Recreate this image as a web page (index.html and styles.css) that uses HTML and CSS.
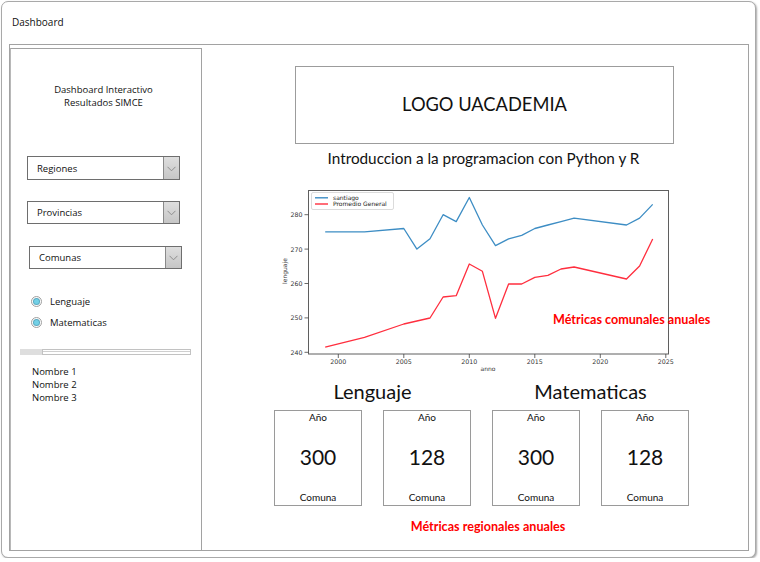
FILE: index.html
```html
<!DOCTYPE html>
<html lang="es">
<head>
<meta charset="utf-8">
<title>Dashboard</title>
<link rel="stylesheet" href="styles.css">
</head>
<body>
<div class="window">
  <div class="titlebar">Dashboard</div>
  <div class="frame">
    <aside class="sidebar">
      <div class="side-title">Dashboard Interactivo<br>Resultados SIMCE</div>

      <div class="select sel-regiones">
        <span class="sel-label">Regiones</span>
        <span class="sel-btn"><svg width="9" height="6" viewBox="0 0 9 6"><polyline points="0.5,0.8 4.5,4.8 8.5,0.8" fill="none" stroke="#8e8e8e" stroke-width="1"/></svg></span>
      </div>
      <div class="select sel-provincias">
        <span class="sel-label">Provincias</span>
        <span class="sel-btn"><svg width="9" height="6" viewBox="0 0 9 6"><polyline points="0.5,0.8 4.5,4.8 8.5,0.8" fill="none" stroke="#8e8e8e" stroke-width="1"/></svg></span>
      </div>
      <div class="select sel-comunas">
        <span class="sel-label">Comunas</span>
        <span class="sel-btn"><svg width="9" height="6" viewBox="0 0 9 6"><polyline points="0.5,0.8 4.5,4.8 8.5,0.8" fill="none" stroke="#8e8e8e" stroke-width="1"/></svg></span>
      </div>

      <div class="radios">
        <label class="radio"><span class="radio-dot"></span>Lenguaje</label>
        <label class="radio"><span class="radio-dot"></span>Matematicas</label>
      </div>

      <div class="slider"><span class="slider-fill"></span><span class="slider-track"></span></div>

      <ul class="names">
        <li>Nombre 1</li>
        <li>Nombre 2</li>
        <li>Nombre 3</li>
      </ul>
    </aside>

    <main class="main">
      <div class="logo">LOGO UACADEMIA</div>
      <div class="intro">Introduccion a la programacion con Python y R</div>

      <div class="chart">
        <svg class="chart-svg" width="440" height="191" viewBox="280 184 440 191">
          <rect x="308.5" y="190.5" width="360" height="163.5" fill="#fff" stroke="#5f5f5f" stroke-width="1"/>
          <g stroke="#444" stroke-width="0.8">
            <line x1="304.5" y1="352.3" x2="308.5" y2="352.3"/>
            <line x1="304.5" y1="317.9" x2="308.5" y2="317.9"/>
            <line x1="304.5" y1="283.5" x2="308.5" y2="283.5"/>
            <line x1="304.5" y1="249.1" x2="308.5" y2="249.1"/>
            <line x1="304.5" y1="214.7" x2="308.5" y2="214.7"/>
            <line x1="338.3" y1="354" x2="338.3" y2="358"/>
            <line x1="403.8" y1="354" x2="403.8" y2="358"/>
            <line x1="469.3" y1="354" x2="469.3" y2="358"/>
            <line x1="534.8" y1="354" x2="534.8" y2="358"/>
            <line x1="600.3" y1="354" x2="600.3" y2="358"/>
            <line x1="665.8" y1="354" x2="665.8" y2="358"/>
          </g>
          <g class="tick" text-anchor="end">
            <text x="302.5" y="354.7">240</text>
            <text x="302.5" y="320.3">250</text>
            <text x="302.5" y="285.9">260</text>
            <text x="302.5" y="251.5">270</text>
            <text x="302.5" y="217.1">280</text>
          </g>
          <g class="tick" text-anchor="middle">
            <text x="338.3" y="364">2000</text>
            <text x="403.8" y="364">2005</text>
            <text x="469.3" y="364">2010</text>
            <text x="534.8" y="364">2015</text>
            <text x="600.3" y="364">2020</text>
            <text x="665.8" y="364">2025</text>
          </g>
          <text class="axis-label" x="488" y="371" text-anchor="middle">anno</text>
          <text class="axis-label" x="287" y="271" text-anchor="middle" transform="rotate(-90 287 271)">lenguaje</text>

          <polyline fill="none" stroke="#3d8dc4" stroke-width="1.3" stroke-linejoin="round"
            points="325.2,231.9 364.5,231.9 403.8,228.5 416.9,249.1 430,238.8 443.1,214.7 456.2,221.6 469.3,197.5 482.4,225.0 495.5,245.7 508.6,238.8 521.7,235.3 534.8,228.5 547.9,225.0 561,221.6 574.1,218.1 626.5,225.0 639.6,218.1 652.7,204.4"/>
          <polyline fill="none" stroke="#ff2e3e" stroke-width="1.3" stroke-linejoin="round"
            points="325.2,347.1 364.5,337.3 403.8,324 416.9,321 430,318 443.1,297 456.2,295.7 469.3,264 482.4,271.3 495.5,318.3 508.6,284 521.7,284 534.8,277.3 547.9,275.3 561,269 574.1,267 626.5,279 639.6,266 652.7,239"/>

          <rect x="311.5" y="192.5" width="82" height="17" rx="1.5" fill="#fff" fill-opacity="0.85" stroke="#d2d2d2" stroke-width="0.8"/>
          <line x1="315" y1="197.8" x2="328" y2="197.8" stroke="#3d8dc4" stroke-width="1.4"/>
          <line x1="315" y1="204" x2="328" y2="204" stroke="#ff2e3e" stroke-width="1.4"/>
          <text class="legend" x="333" y="200">santiago</text>
          <text class="legend" x="333" y="206.2">Promedio General</text>
        </svg>
        <span class="chart-note">Métricas comunales anuales</span>
      </div>

      <div class="metrics">
        <section class="group">
          <h2 class="group-title">Lenguaje</h2>
          <div class="cards">
            <div class="card"><span class="card-year">Año</span><span class="card-value">300</span><span class="card-label">Comuna</span></div>
            <div class="card"><span class="card-year">Año</span><span class="card-value">128</span><span class="card-label">Comuna</span></div>
          </div>
        </section>
        <section class="group">
          <h2 class="group-title">Matematicas</h2>
          <div class="cards">
            <div class="card"><span class="card-year">Año</span><span class="card-value">300</span><span class="card-label">Comuna</span></div>
            <div class="card"><span class="card-year">Año</span><span class="card-value">128</span><span class="card-label">Comuna</span></div>
          </div>
        </section>
      </div>

      <div class="regional">Métricas regionales anuales</div>
    </main>
  </div>
</div>
</body>
</html>
```

FILE: styles.css
```css
* { box-sizing: border-box; }

html, body {
  margin: 0;
  padding: 0;
  background: #ffffff;
}

body {
  font-family: "Open Sans", "Noto Sans", sans-serif;
  color: #111;
}

.window {
  margin: 1px 0 0 1px;
  width: 755px;
  height: 557px;
  border: 1px solid #a9a9a9;
  border-radius: 7px;
  box-shadow: 1px 1px 2px rgba(0, 0, 0, 0.35);
  padding: 0 6px 6px 7px;
  display: flex;
  flex-direction: column;
  background: #fff;
}

.titlebar {
  height: 42px;
  flex: none;
  padding: 13px 0 0 3px;
  font-size: 10px;
  line-height: 14px;
  color: #111;
}

.frame {
  height: 507px;
  flex: none;
  border: 1px solid #a2a2a2;
  display: flex;
}

/* ---------- sidebar ---------- */
.sidebar {
  width: 192px;
  flex: none;
  margin-top: 3px;
  border-top: 1px solid #a2a2a2;
  border-right: 1px solid #a2a2a2;
  border-left: 1px solid #b8b8b8;
  display: flex;
  flex-direction: column;
  align-items: flex-start;
}

.side-title {
  align-self: stretch;
  margin-top: 34px;
  padding-right: 5px;
  text-align: center;
  font-size: 9.5px;
  line-height: 13px;
}

.select {
  display: flex;
  width: 153px;
  border: 1px solid #6e6e6e;
  background: #fff;
}

.sel-regiones { margin: 47px 0 0 16px; height: 24px; }
.sel-provincias { margin: 21px 0 0 16px; height: 23px; }
.sel-comunas { margin: 22px 0 0 18px; height: 23px; }

.sel-label {
  flex: 1;
  padding-left: 9px;
  font-size: 9.5px;
  display: flex;
  align-items: center;
}

.sel-btn {
  width: 16px;
  flex: none;
  border-left: 1px solid #8a8a8a;
  background: linear-gradient(#dedede, #c6c6c6);
  display: flex;
  align-items: center;
  justify-content: center;
  padding-top: 1px;
}

.radios {
  margin-top: 22px;
  display: flex;
  flex-direction: column;
}

.radio {
  height: 21px;
  display: flex;
  align-items: center;
  font-size: 9.5px;
}

.radio-dot {
  width: 11px;
  height: 11px;
  margin: 0 8px 0 20px;
  border: 1px solid #a0a0a0;
  border-radius: 50%;
  background: #fbfbfb;
  display: flex;
  align-items: center;
  justify-content: center;
}

.radio-dot::after {
  content: "";
  width: 5px;
  height: 5px;
  border-radius: 50%;
  background: #72d0e6;
  box-shadow: 0 0 0 1px #5aa9c0;
}

.slider {
  margin: 16px 0 0 9px;
  width: 171px;
  height: 6px;
  display: flex;
}

.slider-fill {
  width: 22px;
  background: #dedede;
}

.slider-track {
  flex: 1;
  border: 1px solid #c2c2c2;
  background: linear-gradient(#fff 0 1.5px, #cfcfcf 1.5px 2.5px, #fff 2.5px);
}

.names {
  list-style: none;
  margin: 9.5px 0 0 21px;
  padding: 0;
  font-size: 9.5px;
  line-height: 13px;
}

/* ---------- main ---------- */
.main {
  flex: 1;
  display: flex;
  flex-direction: column;
  align-items: flex-start;
  font-family: "Lato", "Open Sans", sans-serif;
}

.logo {
  margin: 21px 0 0 93px;
  width: 379px;
  height: 78px;
  border: 1px solid #9c9c9c;
  display: flex;
  align-items: center;
  justify-content: center;
  font-size: 18.3px;
  padding-bottom: 2px;
}

.intro {
  margin: 5px 0 0 92px;
  width: 379px;
  text-align: center;
  font-size: 15.3px;
  line-height: 18px;
}

.chart {
  position: relative;
  margin: 17px 0 0 78px;
  width: 440px;
  height: 191px;
  overflow: hidden;
}

.chart-svg {
  display: block;
}

.chart-svg .tick {
  font-family: "DejaVu Sans", sans-serif;
  font-size: 6.3px;
  fill: #333;
}

.chart-svg .axis-label {
  font-family: "DejaVu Sans", sans-serif;
  font-size: 6px;
  fill: #333;
}

.chart-svg .legend {
  font-family: "DejaVu Sans", sans-serif;
  font-size: 6px;
  fill: #222;
}

.chart-note {
  position: absolute;
  left: 273px;
  top: 128px;
  line-height: 16px;
  font-size: 12.6px;
  font-weight: 700;
  color: #ff0000;
  white-space: nowrap;
}

.metrics {
  margin: 4.5px 0 0 72px;
  display: flex;
  gap: 21px;
}

.group-title {
  margin: 0 0 8.5px;
  font-size: 20px;
  font-weight: 400;
  line-height: 22px;
  text-align: center;
}

.cards {
  display: flex;
  gap: 21px;
}

.card {
  width: 88px;
  height: 96px;
  border: 1px solid #9a9a9a;
  display: flex;
  flex-direction: column;
  align-items: center;
}

.card-year {
  font-size: 10px;
  line-height: 12px;
}

.card-value {
  margin-top: 22px;
  font-size: 21px;
  line-height: 24px;
}

.card-label {
  margin-top: 22px;
  font-size: 10px;
  line-height: 12px;
}

.regional {
  margin: 13px 0 0 72px;
  width: 414px;
  padding-left: 14px;
  text-align: center;
  font-size: 12.6px;
  line-height: 16px;
  font-weight: 700;
  color: #ff0000;
}
```
